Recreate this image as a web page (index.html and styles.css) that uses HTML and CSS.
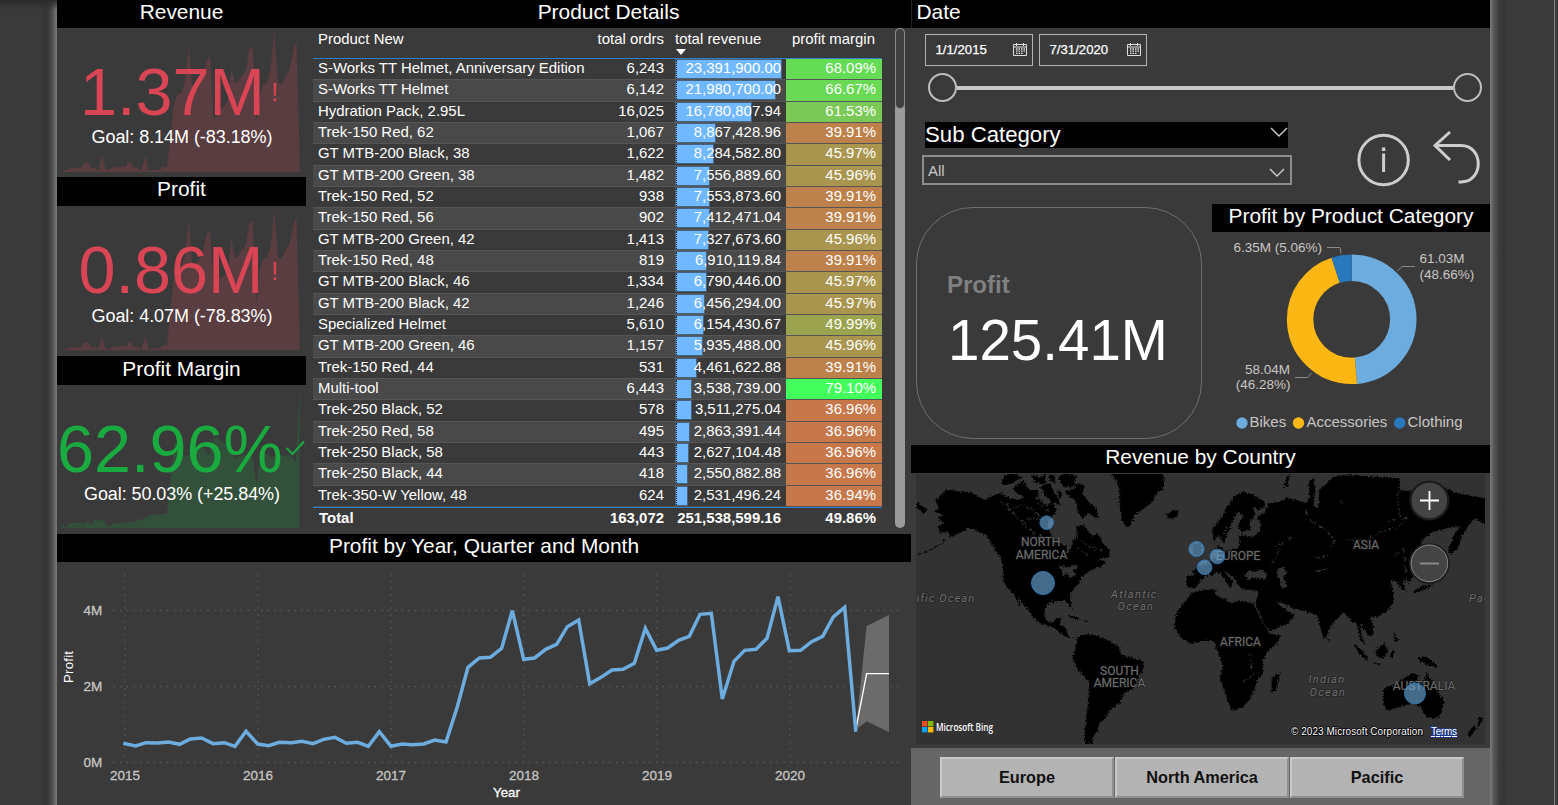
FILE: index.html
```html
<!DOCTYPE html>
<html lang="en">
<head>
<meta charset="utf-8">
<title>Sales dashboard</title>
<link rel="stylesheet" href="styles.css">
</head>
<body>
<div class="gutter gutter-left"></div>
<main class="board">
  <section class="left">
    <div class="upper">
      <div class="kpis">
        <h2 class="bar">Revenue</h2>
        <svg class="kpi" viewBox="57 28 249 149">
          <polygon class="trend bad" transform="scale(.33333)" points="187,516 187,508 200,512 210,504 222,505 231,501 240,507 252,489 264,487 274,503 285,504 295,512 305,467 316,505 327,510 337,502 360,502 368,498 376,502 382,490 392,484 401,503 413,503 424,513 436,468 446,513 458,510 480,511 490,498 501,503 512,400 522,312 532,284 544,278 555,245 566,140 577,262 587,258 598,250 608,235 619,185 630,168 641,356 652,345 663,325 673,318 684,300 694,205 705,250 716,243 727,225 738,212 748,146 758,140 769,365 780,290 790,254 802,248 812,205 823,92 834,250 845,252 856,232 868,210 880,150 889,122 899,465 899,516"/>
          <text class="big bad-text" x="80" y="115">1.37M</text>
          <text class="mark bad-text" x="271" y="101">!</text>
          <text class="goal" x="91.5" y="143" textLength="181">Goal: 8.14M (-83.18%)</text>
        </svg>
        <h2 class="bar">Profit</h2>
        <svg class="kpi" viewBox="57 206 249 149">
          <polygon class="trend bad" transform="translate(0 177.7) scale(.33333)" points="187,516 187,510 200,514 210,508 222,508 231,505 240,510 252,495 264,493 274,508 285,507 295,513 305,476 316,509 327,513 337,505 360,505 368,502 376,506 382,498 392,491 401,507 413,505 424,513 436,476 446,513 458,510 480,511 490,499 501,503 512,390 522,295 532,264 544,262 555,235 566,125 577,262 587,258 598,245 608,225 619,170 630,153 641,330 652,300 663,297 673,292 684,280 694,180 705,240 716,233 727,212 738,200 748,134 758,132 769,375 780,275 790,242 802,238 812,205 823,92 834,240 845,240 856,218 868,200 880,142 889,115 899,465 899,516"/>
          <text class="big bad-text" x="78.5" y="292.5">0.86M</text>
          <text class="mark bad-text" x="271" y="279">!</text>
          <text class="goal" x="91.5" y="321" textLength="181">Goal: 4.07M (-78.83%)</text>
        </svg>
        <h2 class="bar">Profit Margin</h2>
        <svg class="kpi" viewBox="57 385 249 148">
          <polygon class="trend good" transform="translate(0 265) scale(.33333)" points="187,790 187,776 198,789 208,776 220,773 240,774 252,776 264,769 274,780 284,760 295,770 306,760 318,778 328,788 338,777 350,774 370,775 382,771 392,767 402,774 413,761 424,767 436,757 447,752 458,748 470,749 490,747 501,746 512,640 523,528 533,548 544,565 555,572 566,570 577,560 600,540 612,550 628,570 641,520 652,515 665,530 684,540 695,545 706,578 725,570 740,573 758,576 769,660 780,580 790,560 812,575 834,575 845,570 856,572 865,570 876,575 888,592 899,365 899,790"/>
          <text class="big good-text" x="57" y="471.5">62.96%</text>
          <path class="check" d="M286.500 448L292.500 454L304 441.500"/>
          <text class="goal" x="84" y="500" textLength="196">Goal: 50.03% (+25.84%)</text>
        </svg>
      </div>
      <div class="details">
        <h2 class="bar">Product Details</h2>
        <div class="details-body">
          <div class="table">
            <div class="row head"><span>Product New</span><span>total ordrs</span><span>total revenue<i class="sort"></i></span><span>profit margin</span></div>
            <div class="row"><span>S-Works TT Helmet, Anniversary Edition</span><span>6,243</span><span><i class="databar" style="width:105px"></i><b>23,391,900.00</b></span><span style="background:#64dc55">68.09%</span></div>
            <div class="row"><span>S-Works TT Helmet</span><span>6,142</span><span><i class="databar" style="width:99px"></i><b>21,980,700.00</b></span><span style="background:#69d956">66.67%</span></div>
            <div class="row"><span>Hydration Pack, 2.95L</span><span>16,025</span><span><i class="databar" style="width:75px"></i><b>16,780,807.94</b></span><span style="background:#7ac956">61.53%</span></div>
            <div class="row"><span>Trek-150 Red, 62</span><span>1,067</span><span><i class="databar" style="width:39px"></i><b>8,867,428.96</b></span><span style="background:#bd824b">39.91%</span></div>
            <div class="row"><span>GT MTB-200 Black, 38</span><span>1,622</span><span><i class="databar" style="width:37px"></i><b>8,284,582.80</b></span><span style="background:#a9954d">45.97%</span></div>
            <div class="row"><span>GT MTB-200 Green, 38</span><span>1,482</span><span><i class="databar" style="width:33px"></i><b>7,556,889.60</b></span><span style="background:#a9954d">45.96%</span></div>
            <div class="row"><span>Trek-150 Red, 52</span><span>938</span><span><i class="databar" style="width:33px"></i><b>7,553,873.60</b></span><span style="background:#bd824b">39.91%</span></div>
            <div class="row"><span>Trek-150 Red, 56</span><span>902</span><span><i class="databar" style="width:33px"></i><b>7,412,471.04</b></span><span style="background:#bd824b">39.91%</span></div>
            <div class="row"><span>GT MTB-200 Green, 42</span><span>1,413</span><span><i class="databar" style="width:32px"></i><b>7,327,673.60</b></span><span style="background:#a9954d">45.96%</span></div>
            <div class="row"><span>Trek-150 Red, 48</span><span>819</span><span><i class="databar" style="width:30px"></i><b>6,910,119.84</b></span><span style="background:#bd824b">39.91%</span></div>
            <div class="row"><span>GT MTB-200 Black, 46</span><span>1,334</span><span><i class="databar" style="width:30px"></i><b>6,790,446.00</b></span><span style="background:#a9954d">45.97%</span></div>
            <div class="row"><span>GT MTB-200 Black, 42</span><span>1,246</span><span><i class="databar" style="width:28px"></i><b>6,456,294.00</b></span><span style="background:#a9954d">45.97%</span></div>
            <div class="row"><span>Specialized Helmet</span><span>5,610</span><span><i class="databar" style="width:27px"></i><b>6,154,430.67</b></span><span style="background:#9ba34e">49.99%</span></div>
            <div class="row"><span>GT MTB-200 Green, 46</span><span>1,157</span><span><i class="databar" style="width:26px"></i><b>5,935,488.00</b></span><span style="background:#a9954d">45.96%</span></div>
            <div class="row"><span>Trek-150 Red, 44</span><span>531</span><span><i class="databar" style="width:20px"></i><b>4,461,622.88</b></span><span style="background:#bd824b">39.91%</span></div>
            <div class="row"><span>Multi-tool</span><span>6,443</span><span><i class="databar" style="width:15px"></i><b>3,538,739.00</b></span><span style="background:#42ff5b">79.10%</span></div>
            <div class="row"><span>Trek-250 Black, 52</span><span>578</span><span><i class="databar" style="width:15px"></i><b>3,511,275.04</b></span><span style="background:#c6784a">36.96%</span></div>
            <div class="row"><span>Trek-250 Red, 58</span><span>495</span><span><i class="databar" style="width:13px"></i><b>2,863,391.44</b></span><span style="background:#c6784a">36.96%</span></div>
            <div class="row"><span>Trek-250 Black, 58</span><span>443</span><span><i class="databar" style="width:12px"></i><b>2,627,104.48</b></span><span style="background:#c6784a">36.96%</span></div>
            <div class="row"><span>Trek-250 Black, 44</span><span>418</span><span><i class="databar" style="width:11px"></i><b>2,550,882.88</b></span><span style="background:#c6784a">36.96%</span></div>
            <div class="row"><span>Trek-350-W Yellow, 48</span><span>624</span><span><i class="databar" style="width:11px"></i><b>2,531,496.24</b></span><span style="background:#c6784a">36.94%</span></div>
            <div class="row total"><span>Total</span><span>163,072</span><span>251,538,599.16</span><span>49.86%</span></div>
          </div>
          <div class="scroll"><div class="thumb"></div></div>
        </div>
      </div>
    </div>
    <h2 class="bar bar-line">Profit by Year, Quarter and Month</h2>
    <svg class="line-chart" viewBox="57 562 854 243">
      <g class="grid">
        <path d="M113.500 610.500H902M113.500 686.500H902M113.500 762.500H902"/>
        <path d="M125 574V762M258 574V762M391 574V762M524 574V762M657 574V762M790 574V762"/>
      </g>
      <g class="axis">
        <text x="83.500" y="615">4M</text><text x="83.500" y="691">2M</text><text x="83.500" y="767">0M</text>
        <text x="110" y="780">2015</text><text x="243" y="780">2016</text><text x="376" y="780">2017</text><text x="509" y="780">2018</text><text x="642" y="780">2019</text><text x="775" y="780">2020</text>
      </g>
      <text class="axis-title" x="493" y="797">Year</text>
      <text class="axis-title upright" transform="translate(72.500 683) rotate(-90)" textLength="32">Profit</text>
      <g transform="translate(0 530) scale(.33333)">
        <polygon class="band" points="2567,600 2600,288 2667,255 2667,607 2600,574"/>
        <polyline class="forecast" points="2567,600 2600,431 2667,431"/>
        <polyline class="series" points="375,641 407,648 438,638 473,639 506,636 539,643 571,627 605,624 639,641 673,638 705,649 738,604 773,642 806,647 838,637 873,638 906,634 939,641 971,628 1005,622 1039,640 1073,637 1105,649 1138,605 1173,649 1206,642 1238,644 1271,642 1304,630 1338,636 1372,530 1404,412 1438,384 1471,382 1505,355 1537,242 1571,388 1604,384 1637,358 1670,343 1702,290 1736,270 1769,461 1803,442 1836,420 1869,418 1903,400 1936,295 1970,361 2003,354 2036,331 2068,319 2100,253 2134,250 2167,507 2202,394 2234,361 2268,358 2301,325 2334,200 2368,362 2402,361 2435,335 2468,319 2500,261 2534,232 2567,600"/>
      </g>
    </svg>
  </section>

  <section class="right">
    <h2 class="bar date-title">Date</h2>
    <div class="filters">
      <div class="dates">
        <div class="date"><span>1/1/2015</span>
          <svg viewBox="0 0 14 13"><path d="M.5 1.500h13v11H.5zM.5 4h13M3.500 0v3M10.500 0v3"/><path class="days" d="M3 6h9M3 8.200h9M3 10.400h7"/></svg></div>
        <div class="date"><span>7/31/2020</span>
          <svg viewBox="0 0 14 13"><path d="M.5 1.500h13v11H.5zM.5 4h13M3.500 0v3M10.500 0v3"/><path class="days" d="M3 6h9M3 8.200h9M3 10.400h7"/></svg></div>
      </div>
      <div class="slider"><i class="knob"></i><i class="track"></i><i class="knob"></i></div>
      <div class="filter-row">
        <div class="subcat">
          <div class="subcat-title">Sub Category<svg viewBox="0 0 18 10"><path d="M1 1L9 9L17 1"/></svg></div>
          <div class="select"><span>All</span><svg viewBox="0 0 16 9"><path d="M1 1L8 8L15 1"/></svg></div>
        </div>
        <svg class="actions" viewBox="1350 125 140 70">
          <circle cx="1383.600" cy="160" r="24.700"/>
          <path d="M1383.600 153.500V172"/><path class="dot" d="M1383.600 147.500V151"/>
          <path d="M1450 132L1435 145.500L1450 160M1435 145.500H1461C1484 145.500 1484 182 1461 182H1458.500"/>
        </svg>
      </div>
    </div>
    <div class="middle">
      <div class="card"><div class="card-label">Profit</div><div class="card-value">125.41M</div></div>
      <div class="donut-box">
        <h2 class="bar">Profit by Product Category</h2>
        <svg class="donut" viewBox="1212 232 278 206">
          <g transform="rotate(-90 1351.700 319.300)" fill="none" stroke-width="26.400">
            <circle cx="1351.700" cy="319.300" r="51.600" stroke="#6dacde" pathLength="100" stroke-dasharray="48.660 100"/>
            <circle cx="1351.700" cy="319.300" r="51.600" stroke="#fcb714" pathLength="100" stroke-dasharray="46.280 100" stroke-dashoffset="-48.660"/>
            <circle cx="1351.700" cy="319.300" r="51.600" stroke="#2878bd" pathLength="100" stroke-dasharray="5.060 100" stroke-dashoffset="-94.940"/>
          </g>
          <path class="leader" d="M1327 247.500H1340L1341 253.500M1397.500 271L1402 266.500H1415M1295 377.500H1307.500L1311.500 373"/>
          <g class="donut-labels">
            <text x="1233.500" y="252">6.35M (5.06%)</text>
            <text x="1419.500" y="263">61.03M</text><text x="1419.500" y="279">(48.66%)</text>
            <text x="1290" y="374" text-anchor="end">58.04M</text><text x="1290.500" y="389" text-anchor="end">(46.28%)</text>
          </g>
          <circle cx="1242" cy="423" r="5.700" fill="#6dacde"/><circle cx="1298.500" cy="423" r="5.700" fill="#fcb714"/><circle cx="1399.700" cy="423" r="5.700" fill="#2878bd"/>
          <g class="legend"><text x="1249.500" y="427">Bikes</text><text x="1306.500" y="427">Accessories</text><text x="1407.500" y="427">Clothing</text></g>
        </svg>
      </div>
    </div>
    <h2 class="bar">Revenue by Country</h2>
    <svg class="map" viewBox="916 474 569 270">
      <defs>
        <filter id="coast" x="-5%" y="-5%" width="110%" height="110%"><feTurbulence type="fractalNoise" baseFrequency=".2" numOctaves="3" seed="4"/><feDisplacementMap in="SourceGraphic" scale="16" xChannelSelector="R" yChannelSelector="G"/></filter>
      </defs>
      <rect x="916" y="474" width="569" height="270" fill="#323232"/>
      <g class="land" filter="url(#coast)" transform="translate(906 440) scale(.33333)">
        <path d="M90 180L105 165 120 150 140 150 165 155 190 155 215 170 240 180 262 165 285 160 310 175 340 180 360 165 385 170 400 180 420 195 440 190 455 210 435 235 425 250 430 275 440 295 460 305 480 320 484 345 495 325 500 300 515 290 512 260 530 255 545 270 560 290 575 280 590 310 610 330 612 350 590 355 575 360 600 365 590 378 565 385 545 395 525 415 515 435 500 450 490 465 497 490 497 508 488 495 480 482 455 483 430 488 417 505 415 525 425 545 440 548 450 535 467 533 460 555 480 562 484 580 498 597 475 590 455 572 440 562 415 555 390 542 370 515 350 490 334 472 345 500 338 495 325 465 305 445 292 420 290 375 285 355 275 340 255 310 240 285 220 275 190 265 165 275 150 285 135 290 125 275 100 278 95 262 112 250 95 235 112 225 85 215 100 205z"/>
        <path d="M285 130L295 104 325 100 350 112 320 130 300 135zM320 145L350 122 370 150 395 150 398 172 345 168zM375 102L400 112 420 100 415 135 385 125zM405 140L430 130 450 165 465 195 435 185 415 165zM455 110L485 100 512 108 500 140 470 140zM475 155L510 145 532 165 552 190 572 205 577 237 545 220 530 238 515 215 510 185zM500 130L535 135 530 162 515 155zM455 150L470 160 460 180zM425 105L445 104 450 130 435 125z"/>
        <path d="M618 102L630 120 640 150 640 190 648 240 660 262 675 255 685 225 715 205 740 185 750 160 768 150 775 125 770 95 618 95zM780 225L800 211 817 213 815 230 795 238zM843 408L877 402 885 425 865 445 843 440zM480 524L510 530 525 540 505 536zM530 541L550 544 540 547zM30 185L65 208 55 220 33 205zM858 310L885 312 888 345 862 342z"/>
        <path d="M515 590L540 583 565 585 600 598 640 620 645 645 685 655 715 665 712 690 695 715 685 745 655 760 640 790 610 810 600 835 580 850 575 875 560 890 560 912 535 912 538 860 545 800 550 725 530 705 510 680 500 650 510 620z"/>
        <path d="M135 285L100 315 70 330 32 346" fill="none" stroke="#000" stroke-width="3" stroke-dasharray="12 5"/>
        <path class="water" d="M455 375L480 382 510 375 515 385 500 392 512 405 490 415 485 398 470 410 467 392z"/>
        <path class="lakes" d="M280 180L310 210 350 195 390 215 410 240 380 235 345 240 360 260 390 280 430 300M300 190L330 230 370 265 400 300 430 325M390 185L430 215M520 300L560 325 590 330M510 320L545 345"/>
      </g>
      <g class="land" filter="url(#coast)" transform="translate(1200 440) scale(.33333)">
        <path d="M-25 458L0 452 45 448 50 468 75 478 95 488 120 482 155 488 165 500 180 535 200 565 210 580 243 587 235 605 200 640 188 665 190 700 170 720 165 745 150 775 130 800 95 812 85 790 75 755 60 715 68 680 60 650 48 625 45 605 20 600 0 605 -30 612 -60 590 -77 560 -70 520 -50 490z"/>
        <path d="M5 420L-25 395 0 378 30 370 50 345 50 318 62 325 75 335 110 325 120 315 118 290 112 268 118 285 160 290 178 275 185 250 170 235 195 215 205 190 235 185 260 175 290 180 318 190 330 170 325 130 340 112 345 150 340 195 355 205 358 150 380 130 400 110 440 104 480 108 560 112 600 115 600 150 640 155 700 150 740 145 770 160 800 165 855 175 870 178 870 245 855 250 825 235 805 255 785 290 775 320 755 345 745 330 760 290 778 258 740 265 700 275 665 300 660 320 650 340 640 380 640 410 625 430 620 415 610 430 620 455 605 450 592 425 570 420 580 450 580 490 560 515 530 530 510 530 522 560 520 585 505 585 490 565 480 545 485 590 500 620 480 600 470 550 455 545 440 525 430 515 400 550 385 570 380 590 370 595 360 560 350 525 320 515 280 505 240 485 232 488 265 515 285 525 265 550 210 573 195 555 175 515 165 490 175 465 172 452 130 448 110 430 105 415 90 405 80 395 70 390 98 425 92 445 72 415 55 395 38 405 20 405z"/>
        <path d="M40 305L38 265 65 230 80 200 100 170 130 155 160 165 195 185 195 200 175 210 160 200 165 225 150 245 150 270 125 275 112 260 130 225 115 215 100 235 90 265 80 290 70 310 58 285zM250 145L262 105 270 105 262 140z"/>
        <path d="M215 710L240 700 228 750 215 758zM384 597L390 600 389 606zM460 612L480 625 505 655 500 662 480 645zM510 668L545 671 540 676zM525 632L555 608 563 635 550 655 530 650zM570 640L585 632 575 660zM578 570L590 595 600 600 585 605zM650 652L680 650 705 670 712 682 680 674 660 662zM640 455L660 440 690 435 705 415 712 400 700 435 670 450 650 458z"/>
        <path d="M548 750L560 740 585 735 615 712 640 700 655 705 650 720 670 735 680 695 695 725 715 755 732 785 725 815 712 835 680 832 660 800 640 790 600 800 560 813 552 795zM838 830L850 838 832 862zM822 855L832 865 810 890 800 882z"/>
        <path class="water" d="M135 405L150 390 165 397 180 385 203 405 195 418 160 415 145 420zM232 390L250 380 262 400 250 410 262 440 245 445 240 420 232 408z"/>
        <path class="lakes" d="M318 210L325 240 375 265 405 300 395 320M440 300L500 300 545 275 600 260 620 235 560 245M600 120L592 170 600 235M580 350L610 325 620 400M215 370L235 345 230 320 280 290M350 355L385 345M350 395L385 385M420 185L440 190M150 640L155 690M130 725L165 700M80 260L70 290"/>
      </g>
      <g class="place"><text x="1040.700" y="546">NORTH</text><text x="1041.500" y="558.500">AMERICA</text><text x="1119.500" y="674.500">SOUTH</text><text x="1119.500" y="687">AMERICA</text><text x="1238" y="560">EUROPE</text><text x="1366" y="549">ASIA</text><text x="1240.500" y="645.500">AFRICA</text><text x="1424" y="690">AUSTRALIA</text></g>
      <g class="ocean"><text x="916.500" y="602" textLength="59">ific Ocean</text><text x="1111" y="598">Atlantic</text><text x="1117.500" y="610">Ocean</text><text x="1308.500" y="683">Indian</text><text x="1309.500" y="695.500">Ocean</text><text x="1469" y="602">Pac</text></g>
      <g class="bubbles"><circle cx="1046.700" cy="522.700" r="6.800"/><circle cx="1043" cy="583" r="11.500"/><circle cx="1196.500" cy="549" r="7.600"/><circle cx="1217.300" cy="556.500" r="7.300"/><circle cx="1204.600" cy="567.300" r="7.300"/><circle cx="1415" cy="693.500" r="10.500"/></g>
      <circle cx="1429.400" cy="500.500" r="20" fill="#1d1d1d"/><circle cx="1429.400" cy="500.500" r="17.800" fill="#444"/>
      <path d="M1420 500.500H1439M1429.500 491V510" stroke="#fff" stroke-width="1.800"/>
      <circle cx="1429.400" cy="563.500" r="20.500" fill="#1d1d1d"/><circle cx="1429.400" cy="563.300" r="18.300" fill="#444" stroke="#8a8a8a" stroke-width="1"/>
      <path d="M1420 563.500H1439" stroke="#888" stroke-width="2"/>
      <path fill="#f25022" d="M922 721h5.400v5.400h-5.400z"/><path fill="#80bb03" d="M928 721h5.400v5.400h-5.400z"/><path fill="#00a4ef" d="M922 727h5.400v5.400h-5.400z"/><path fill="#ffb903" d="M928 727h5.400v5.400h-5.400z"/>
      <text class="bing" x="936" y="731" textLength="57" lengthAdjust="spacingAndGlyphs">Microsoft Bing</text>
      <text class="copy" x="1291" y="735" textLength="132">© 2023 Microsoft Corporation</text>
      <text class="copy terms" x="1431" y="735" textLength="26">Terms</text>
    </svg>
    <div class="regions"><button>Europe</button><button>North America</button><button>Pacific</button></div>
  </section>
</main>
<div class="gutter gutter-right"></div>
</body>
</html>
```

FILE: styles.css
```css
* { box-sizing: border-box; }
body { margin: 0; width: 1558px; height: 805px; overflow: hidden; display: flex; background: #3a3a3a; color: #fff; font-family: "Liberation Sans", Arial, sans-serif; }
svg { display: block; }
.gutter-left { width: 57px; background: linear-gradient(#2a2a2a, transparent 10px), linear-gradient(90deg, #3a3a3a 42px, #343434 45px, #3c3c3c 49px, #555 53px, #7b7b7b 57px); }
.gutter-right { width: 65px; border-right: 1px solid #858585; margin-right: 3px; background: linear-gradient(90deg, #7b7b7b, #555 4px, #3c3c3c 9px, #343434 13px, #3a3a3a 18px); }
.board { width: 1433px; height: 805px; display: grid; grid-template-columns: 854px 579px; }
.bar { margin: 0; height: 28px; flex: none; background: #000; font-size: 20.900px; font-weight: 400; line-height: 24px; text-align: center; }

.left { display: flex; flex-direction: column; }
.upper { display: grid; grid-template-columns: 249px 605px; height: 534px; }
.kpis { display: flex; flex-direction: column; }
.kpis .bar:nth-of-type(n+2) { height: 29px; }
.kpis .bar:nth-of-type(3) { line-height: 26px; }
.kpi { width: 249px; height: 149px; flex: none; }
.kpi:nth-of-type(2) { height: 150px; }
.kpi:last-child { height: 148px; }
.big { font-size: 66.500px; }
.mark { font-size: 26px; }
.goal { font-size: 18px; fill: #fff; }
.bad-text { fill: #d94554; }
.good-text { fill: #1aab40; }
.bad { fill: #5a3d40; }
.good { fill: #33513a; }
.check { fill: none; stroke: #1aab40; stroke-width: 2; }

.details { display: flex; flex-direction: column; }
.details-body { display: flex; justify-content: space-between; padding: 0 6px 0 7px; }
.table { width: 569px; font-size: 14.950px; }
.row { display: grid; grid-template-columns: 277px 80px 116px 96px; height: 21.33px; line-height: 17.500px; text-align: right; }
.row span { position: relative; border-bottom: 1px solid #555; padding-right: 6px; white-space: nowrap; }
.row span:first-child { text-align: left; padding-left: 5px; }
.row span:nth-child(3) { padding-right: 5px; }
.row b { position: relative; font-weight: 400; }
.row:nth-child(odd) { background: #494949; }
.row.head { height: 31px; line-height: 22px; background: none; border-bottom: 1px solid #2f7fc6; }
.row.head span { border: 0; }
.row.head span:nth-child(3) { text-align: left; padding-left: 5px; }
.row.head span:nth-child(4) { padding-right: 7px; }
.sort { position: absolute; left: 6px; bottom: 3px; border: 5px solid transparent; border-top: 6px solid #fff; border-bottom: 0; }
.databar { position: absolute; left: 6px; top: 1px; height: 18px; background: #70b8ff; box-shadow: 0 0 0 1px #48637e; border-left: 1px dotted #222; }
.row.total { background: none; font-weight: 700; line-height: 20px; border-top: 1px solid #2f7fc6; }
.row.total span { border: 0; }
.row.total span:first-child { padding-left: 6px; }
.scroll { width: 10px; height: 500px; border-radius: 5px; background: #9b9b9b; }
.thumb { height: 81px; border-radius: 5px; background: #404040; border: 1px solid #8a8a8a; }

.bar-line { line-height: 24px; }
.line-chart { width: 854px; height: 243px; }
.grid path { stroke: #5c5c5c; stroke-width: 1.300; stroke-dasharray: 1.300 5.400; fill: none; }
.axis text { font-size: 13.500px; fill: #c8c6c4; stroke: #c8c6c4; stroke-width: .3px; }
.axis-title { font-size: 13.300px; fill: #fff; stroke: #fff; stroke-width: .3px; }
.upright { stroke: none; }
.band { fill: #6b6b6b; }
.forecast { fill: none; stroke: #fff; stroke-width: 4; }
.series { fill: none; stroke: #6dacde; stroke-width: 10.500; stroke-linejoin: miter; stroke-linecap: square; stroke-miterlimit: 3; }

.right { display: flex; flex-direction: column; }
.date-title { text-align: left; padding-left: 4.500px; border-left: 1px solid #222; }
.filters { height: 176px; padding: 6px 0 0 11px; }
.dates { display: flex; gap: 6px; padding-left: 3px; }
.date { width: 108px; height: 32px; border: 1.500px solid #b3b0ad; display: flex; align-items: center; justify-content: space-between; padding: 0 5px 2px 9.500px; font-size: 13.200px; -webkit-text-stroke: .25px #fff; }
.date svg { width: 14px; height: 13px; fill: none; stroke: #e0dedc; stroke-width: 1; }
.date .days { stroke-dasharray: 1.500 1; stroke-width: 1.300; }
.slider { display: flex; align-items: center; width: 560px; padding-left: 6px; margin-top: 7px; }
.knob { width: 29px; height: 29px; flex: none; border: 2px solid #c0bebc; border-radius: 50%; }
.track { flex: 1; height: 4px; background: #c8c6c4; }
.filter-row { display: flex; justify-content: space-between; padding-top: 20px; }
.subcat { width: 370px; }
.subcat-title { margin-left: 3px; width: 363px; height: 26px; background: #000; font-size: 22.200px; line-height: 25px; display: flex; justify-content: space-between; }
.subcat svg { fill: none; stroke: #d0cecc; stroke-width: 1.400; }
.subcat-title svg { width: 18px; height: 10px; margin-top: 5px; }
.select { margin-top: 7px; height: 30px; border: 2px solid #8f8d8b; display: flex; align-items: center; justify-content: space-between; padding: 0 5px 0 4px; font-size: 15px; color: #c8c6c4; }
.select svg { width: 16px; height: 9px; margin-top: 4px; }
.actions { width: 140px; height: 70px; margin-top: 3px; fill: none; stroke: #cfcdcb; stroke-width: 3; }
.actions .dot { stroke-width: 3.500; }

.middle { height: 241px; display: flex; justify-content: space-between; padding-left: 5px; }
.card { width: 286px; height: 232px; margin-top: 3px; border: 1px solid #6e6e6e; border-radius: 57px; padding: 63px 0 0 30px; }
.card-label { font-size: 24px; line-height: 28px; font-weight: 700; color: #808080; }
.card-value { margin: 10px 0 0 1px; font-size: 56.500px; line-height: 64px; }
.donut-box { width: 278px; }
.donut { width: 278px; height: 206px; }
.leader { fill: none; stroke: #8a8a8a; stroke-width: 1; }
.donut-labels { font-size: 13.500px; fill: #c8c6c4; }
.legend { font-size: 15px; fill: #c8c6c4; }

.map { width: 569px; height: 270px; margin: 1px 0 4px 5px; flex: none; }
.land { fill: #000; }
.land .water { fill: #323232; }
.land .lakes { fill: none; stroke: #323232; stroke-width: 3.500; stroke-dasharray: 14 5 6 8; }
.place text { font: 12px Roboto, sans-serif; fill: #6c6c6c; text-anchor: middle; paint-order: stroke; stroke: #1b1b1b; stroke-width: 1px; }
.ocean text { font: italic 11px Roboto, sans-serif; fill: #707070; letter-spacing: 1.300px; paint-order: stroke; stroke: #222; stroke-width: 1.500px; }
.bubbles circle { fill: #6dacde; fill-opacity: .62; stroke: #2e75b0; stroke-width: 1; }
.bing { font: 600 10px "Open Sans", sans-serif; fill: #fff; }
.copy { font-size: 10px; fill: #fff; paint-order: stroke; stroke: #000; stroke-width: 1.500px; }
.terms { text-decoration: underline; stroke: #1c3a94; }
.regions { flex: 1; display: flex; gap: 1px; padding: 9px 0 8px 29px; background: #666; }
.regions button { width: 174px; height: 41px; border: 2px solid #8f8f8f; border-top-color: #c9c9c9; border-left-color: #c9c9c9; background: #b3b3b3; color: #111; font: 700 16.300px "Liberation Sans", Arial, sans-serif; padding: 0; }
```
